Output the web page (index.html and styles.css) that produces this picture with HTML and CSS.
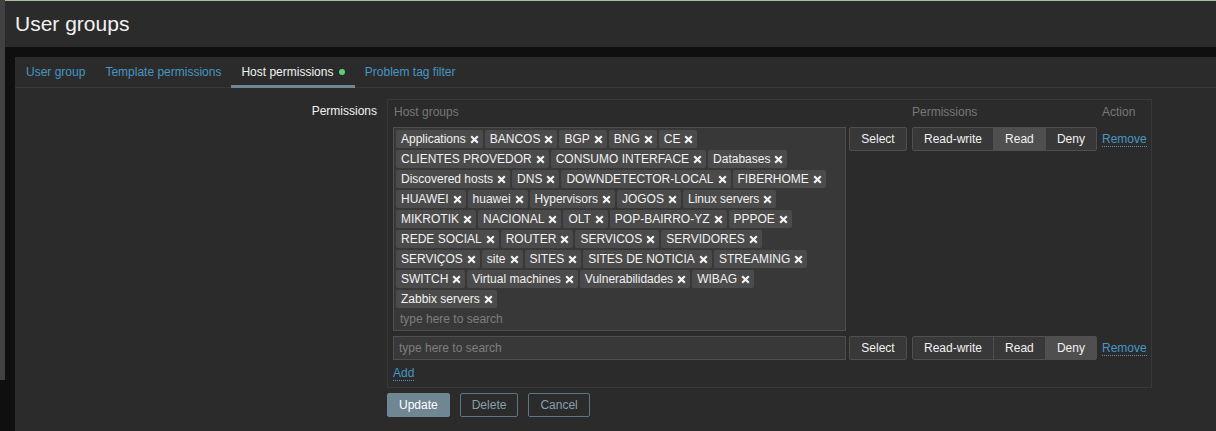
FILE: index.html
```html
<!DOCTYPE html>
<html lang="en">
<head>
    <meta charset="UTF-8">
    <title>User groups</title>
    <link rel="stylesheet" href="styles.css">
</head>
<body>
    <div class="sidebar"></div>

    <div class="main">
        <header class="page-header">
            <h1>User groups</h1>
        </header>

        <div class="panel">
            <nav class="tabs">
                <a href="#" class="tab">User group</a>
                <a href="#" class="tab">Template permissions</a>
                <a href="#" class="tab active">Host permissions <span class="dot"></span></a>
                <a href="#" class="tab">Problem tag filter</a>
            </nav>

            <form class="form">
                <label class="form-label">Permissions</label>

                <div class="perm-table">
                    <div class="th">Host groups</div>
                    <div class="th"></div>
                    <div class="th">Permissions</div>
                    <div class="th">Action</div>

                    <div class="multiselect">
                        <ul class="tags" id="tags"></ul>
                        <input type="text" class="ms-input" placeholder="type here to search">
                    </div>
                    <button type="button" class="btn btn-select">Select</button>
                    <div class="segmented">
                        <span class="seg">Read-write</span>
                        <span class="seg on">Read</span>
                        <span class="seg">Deny</span>
                    </div>
                    <div class="action"><a href="#" class="link">Remove</a></div>

                    <input type="text" class="search" placeholder="type here to search">
                    <button type="button" class="btn btn-select">Select</button>
                    <div class="segmented">
                        <span class="seg">Read-write</span>
                        <span class="seg">Read</span>
                        <span class="seg on">Deny</span>
                    </div>
                    <div class="action"><a href="#" class="link">Remove</a></div>

                    <div class="add-row"><a href="#" class="link">Add</a></div>
                </div>

                <div class="buttons">
                    <button type="button" class="btn-main">Update</button>
                    <button type="button" class="btn-alt">Delete</button>
                    <button type="button" class="btn-alt">Cancel</button>
                </div>
            </form>
        </div>
    </div>

    <script>
        const groups = [
            "Applications", "BANCOS", "BGP", "BNG", "CE",
            "CLIENTES PROVEDOR", "CONSUMO INTERFACE", "Databases",
            "Discovered hosts", "DNS", "DOWNDETECTOR-LOCAL", "FIBERHOME",
            "HUAWEI", "huawei", "Hypervisors", "JOGOS", "Linux servers",
            "MIKROTIK", "NACIONAL", "OLT", "POP-BAIRRO-YZ", "PPPOE",
            "REDE SOCIAL", "ROUTER", "SERVICOS", "SERVIDORES",
            "SERVIÇOS", "site", "SITES", "SITES DE NOTICIA", "STREAMING",
            "SWITCH", "Virtual machines", "Vulnerabilidades", "WIBAG",
            "Zabbix servers"
        ];

        const list = document.getElementById("tags");
        groups.forEach(name => {
            const li = document.createElement("li");
            li.className = "tag";
            li.innerHTML = '<span></span>' +
                '<svg class="x" width="9" height="9" viewBox="0 0 9 9">' +
                '<path d="M1.2 1.2 L7.8 7.8 M7.8 1.2 L1.2 7.8" stroke="#f2f2f2" stroke-width="2.2" fill="none"/></svg>';
            li.querySelector("span").textContent = name;
            list.appendChild(li);
        });
    </script>
</body>
</html>
```

FILE: styles.css
```css
body {
    margin: 0;
    display: flex;
    height: 431px;
    overflow: hidden;
    background: #0f0f10;
    font-family: "Liberation Sans", Arial, sans-serif;
    font-size: 12px;
    color: #f2f2f2;
}

.sidebar {
    width: 5px;
    height: 380px;
    background: #414141;
    flex-shrink: 0;
}

.main {
    flex: 1;
    display: flex;
    flex-direction: column;
}

.page-header {
    height: 46px;
    background: #2b2b2b;
    border-top: 1px solid #a6c39c;
    padding-left: 10px;
}

.page-header h1 {
    margin: 0;
    font-size: 21px;
    font-weight: normal;
    line-height: 46px;
}

.panel {
    flex: 1;
    margin: 10px 0 0 10px;
    background: #2b2b2b;
}

.tabs {
    display: flex;
    height: 30px;
    padding-left: 1px;
    border-bottom: 1px solid #383838;
}

.tab {
    padding: 0 10px;
    line-height: 30px;
    height: 28px;
    color: #4796c4;
    text-decoration: none;
    border-bottom: 3px solid transparent;
}

.tab.active {
    color: #f2f2f2;
    border-bottom-color: #6f8793;
}

.dot {
    display: inline-block;
    width: 6px;
    height: 6px;
    margin-left: 2px;
    border-radius: 50%;
    background: #59d07d;
    vertical-align: 1px;
}

.form {
    display: grid;
    grid-template-columns: 362px auto;
    column-gap: 10px;
    padding-top: 11px;
    align-items: start;
}

.form-label {
    text-align: right;
    line-height: 16px;
    padding-top: 4px;
}

.perm-table {
    width: 758px;
    border: 1px solid #383838;
    padding: 4px 0 6px 5px;
    display: grid;
    grid-template-columns: 456px 63px 190px 1fr;
    row-gap: 5px;
    align-items: start;
}

.th {
    color: #787878;
    line-height: 16px;
    margin-bottom: 2px;
}

.th:first-child {
    padding-left: 1px;
}

.multiselect {
    width: 453px;
    box-sizing: border-box;
    border: 1px solid #4f4f4f;
    background: #383838;
    padding: 2px;
}

.tags {
    list-style: none;
    margin: 0;
    padding: 0;
    display: flex;
    flex-wrap: wrap;
    gap: 2px;
}

.tag {
    display: flex;
    align-items: center;
    gap: 4px;
    height: 18px;
    padding: 0 4px 0 5px;
    background: #4b4b4b;
    border-radius: 2px;
    white-space: nowrap;
}

.tag .x {
    display: block;
}

.ms-input,
.search {
    font-family: inherit;
    font-size: 12px;
    color: #f2f2f2;
    outline: none;
}

.ms-input {
    display: block;
    width: 100%;
    height: 18px;
    margin-top: 2px;
    padding: 0 0 0 4px;
    border: none;
    background: transparent;
    box-sizing: border-box;
}

.search {
    width: 453px;
    height: 24px;
    box-sizing: border-box;
    padding: 0 5px;
    border: 1px solid #4f4f4f;
    background: #383838;
}

::placeholder {
    color: #7e7e7e;
}

.btn {
    height: 24px;
    font-family: inherit;
    font-size: 12px;
    color: #f2f2f2;
    background: #383838;
    border: 1px solid #4f4f4f;
    border-radius: 2px;
}

.btn-select {
    width: 58px;
}

.segmented {
    display: flex;
    width: 185px;
    height: 24px;
    box-sizing: border-box;
    border: 1px solid #4f4f4f;
    border-radius: 2px;
    background: #383838;
    overflow: hidden;
}

.seg {
    flex: auto;
    text-align: center;
    line-height: 22px;
    border-left: 1px solid #4f4f4f;
}

.seg:first-child {
    border-left: none;
    flex: 0 0 80px;
}

.seg.on {
    background: #4f4f4f;
}

.action {
    line-height: 24px;
}

.link {
    color: #4796c4;
    text-decoration: none;
    border-bottom: 1px dotted #4796c4;
}

.add-row {
    grid-column: 1 / -1;
    line-height: 16px;
}

.buttons {
    grid-column: 2;
    display: flex;
    gap: 10px;
    margin-top: 5px;
}

.btn-main,
.btn-alt {
    height: 24px;
    padding: 0 11px;
    font-family: inherit;
    font-size: 12px;
    border-radius: 2px;
}

.btn-main {
    color: #ffffff;
    background: #6f8793;
    border: 1px solid #6f8793;
}

.btn-alt {
    color: #8aa0ab;
    background: transparent;
    border: 1px solid #5b7886;
}
```
